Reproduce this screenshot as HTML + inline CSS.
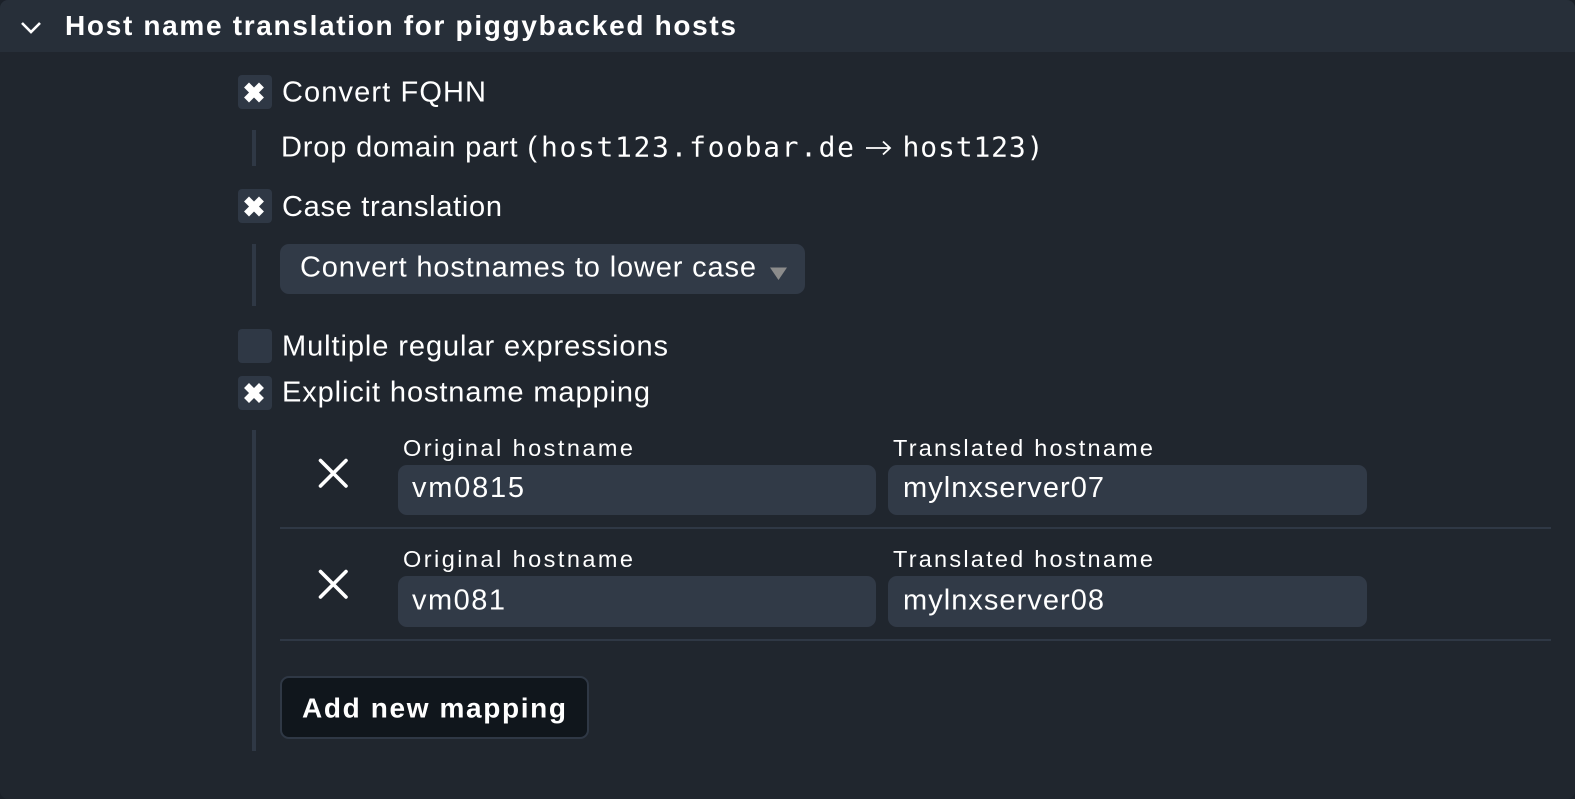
<!DOCTYPE html>
<html><head><meta charset="utf-8"><style>
html,body{margin:0;padding:0;width:1575px;height:799px;overflow:hidden;background:#1b2129}
svg{display:block}
text{font-family:"Liberation Sans",sans-serif;fill:#fff;font-size:29px}
.b{font-weight:700;font-size:28px}
.l{font-size:23.500px}
.m{font-family:"DejaVu Sans Mono",monospace;font-size:28px}
.i{fill:#313a47}
.c{fill:#2f3845}
.bar{fill:#2f3845}
</style></head><body>
<svg width="1575" height="799" viewBox="0 0 1575 799" xmlns="http://www.w3.org/2000/svg">
<rect x="0" y="0" width="1575" height="799" rx="8" fill="#20262e"/>
<path d="M0 52V8a8 8 0 0 1 8-8H1567a8 8 0 0 1 8 8V52Z" fill="#272f39"/>
<path d="M22 23l9 9 9-9" fill="none" stroke="#fff" stroke-width="2.600"/>
<text class="b" x="65" y="35" textLength="671">Host name translation for piggybacked hosts</text>

<rect class="c" x="238" y="75" width="34" height="34" rx="4"/>
<path d="M249 87.500l10 10M259 87.500l-10 10" stroke="#fff" stroke-width="7" stroke-linecap="square"/>
<text x="282" y="101.500" textLength="204">Convert FQHN</text>
<rect class="bar" x="252" y="130" width="4" height="36"/>
<text x="281" y="156.500" textLength="256">Drop domain part (</text>
<text class="m" x="541" y="156.500" textLength="313">host123.foobar.de</text>
<path d="M866 148H890M883 141.500l7 6.500-7 6.500" fill="none" stroke="#fff" stroke-width="1.800"/>
<text class="m" x="902.500" y="156.500" textLength="141">host123)</text>

<rect class="c" x="238" y="189" width="34" height="34" rx="4"/>
<path d="M249 201.500l10 10M259 201.500l-10 10" stroke="#fff" stroke-width="7" stroke-linecap="square"/>
<text x="282" y="216" textLength="220">Case translation</text>
<rect class="bar" x="252" y="244" width="4" height="62"/>
<rect class="i" x="280" y="244" width="525" height="50" rx="9"/>
<text x="300" y="276.500" textLength="456">Convert hostnames to lower case</text>
<path d="M770 267.500H787L778.500 280Z" fill="#8b8b8b"/>

<rect class="c" x="238" y="329" width="34" height="34" rx="4"/>
<text x="282" y="355.500" textLength="386">Multiple regular expressions</text>
<rect class="c" x="238" y="376" width="34" height="34" rx="4"/>
<path d="M249 388l10 10M259 388l-10 10" stroke="#fff" stroke-width="7" stroke-linecap="square"/>
<text x="282" y="401.500" textLength="368">Explicit hostname mapping</text>
<rect class="bar" x="252" y="430" width="4" height="321"/>

<path d="M320.500 460.500L346 486M346 460.500L320.500 486" stroke="#fff" stroke-width="3.600" stroke-linecap="round"/>
<text class="l" x="403" y="456" textLength="230">Original hostname</text>
<text class="l" x="893" y="456" textLength="260">Translated hostname</text>
<rect class="i" x="398" y="465" width="478" height="50" rx="9"/>
<rect class="i" x="888" y="465" width="479" height="50" rx="9"/>
<text x="412" y="497" textLength="112">vm0815</text>
<text x="903" y="497" textLength="201">mylnxserver07</text>
<rect class="bar" x="280" y="527" width="1271" height="2"/>

<path d="M320.500 571.500L346 597M346 571.500L320.500 597" stroke="#fff" stroke-width="3.600" stroke-linecap="round"/>
<text class="l" x="403" y="567" textLength="230">Original hostname</text>
<text class="l" x="893" y="567" textLength="260">Translated hostname</text>
<rect class="i" x="398" y="576" width="478" height="51" rx="9"/>
<rect class="i" x="888" y="576" width="479" height="51" rx="9"/>
<text x="412" y="609.500" textLength="93">vm081</text>
<text x="903" y="609.500" textLength="201">mylnxserver08</text>
<rect class="bar" x="280" y="639" width="1271" height="2"/>

<rect x="281" y="677" width="307" height="61" rx="8" fill="#10161c" stroke="#2f3845" stroke-width="2"/>
<text class="b" x="302" y="717.500" textLength="264">Add new mapping</text>
</svg>
</body></html>
